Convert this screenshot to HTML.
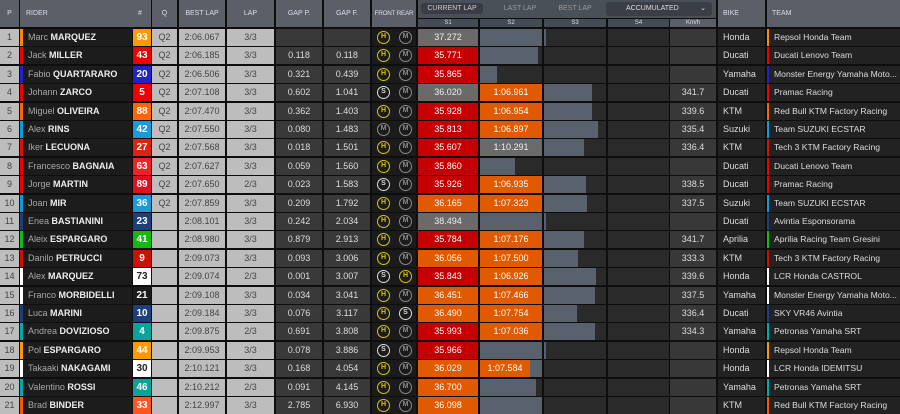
<!DOCTYPE html>
<html><head><meta charset="utf-8"><style>
*{margin:0;padding:0;box-sizing:border-box}
body{width:900px;height:414px;background:#0e0e0e;font-family:"Liberation Sans",sans-serif;overflow:hidden;position:relative}
.h{position:absolute;top:0;height:27px;background:#5b6068;color:#dde;font-size:7px;line-height:27px;text-align:center;white-space:nowrap}
.r{position:absolute;left:0;width:900px;height:17px}
.c{position:absolute;top:0;height:17px;line-height:17px;text-align:center;font-size:9px;overflow:hidden;white-space:nowrap}
.p{left:0;width:19px;background:#bdbdbd;color:#444}
.n{left:20px;width:112px;background:#1c1c1c;color:#a8a8a8;text-align:left;padding-left:5px;border-left:3px solid #f80}
.n b{color:#eee}
.no{left:133px;width:18px;color:#fff;font-weight:bold;font-size:10px}
.q{left:152px;width:25px;background:#bdbdbd;color:#444}
.bl{left:179px;width:46px;background:#bdbdbd;color:#444}
.lp{left:227px;width:47px;background:#bdbdbd;color:#444}
.gp{left:276px;width:46px;background:#393939;color:#ddd}
.gf{left:324px;width:46px;background:#393939;color:#ddd}
.ty{left:372px;width:44px;background:#1b1b1b}
.s1{left:418px;width:60px}.s2{left:480px;width:62px}.s3{left:544px;width:62px}.s4{left:608px;width:61px;background:#2a2a2a}
.km{left:670px;width:46px;background:#383838;color:#ddd}
.bk{left:718px;width:47px;background:#222;color:#ddd;text-align:left;padding-left:5px}
.tm{left:767px;width:133px;background:#222;color:#ddd;text-align:left;padding-left:5px;border-left:2px solid #f80;font-size:8.6px}
.red{background:#c40000;color:#fff}.or{background:#df5a00;color:#fff}.gy{background:#6a6a6a;color:#eee}.dk{background:#2a2a2a}
.dk i{position:absolute;left:0;top:0;height:17px;background:#59616c;font-style:normal}
.t{position:absolute;top:2px;width:13px;height:13px;border-radius:50%;border:1.5px solid #8a8a8a;color:#8a8a8a;font-size:7px;line-height:10px;text-align:center;font-weight:bold}
.t.f{left:5px}.t.b{left:27px}
.t.H{border-color:#d8c800;color:#d8c800}.t.S{border-color:#ddd;color:#ddd}
</style></head><body>
<div class="h" style="left:0;width:19px">P</div>
<div class="h" style="left:20px;width:131px;text-align:left;padding-left:6px">RIDER<span style="position:absolute;left:118px">#</span></div>
<div class="h" style="left:152px;width:25px">Q</div>
<div class="h" style="left:179px;width:46px">BEST LAP</div>
<div class="h" style="left:227px;width:47px">LAP</div>
<div class="h" style="left:276px;width:46px">GAP P.</div>
<div class="h" style="left:324px;width:46px">GAP F.</div>
<div class="h" style="left:372px;width:44px;font-size:6.3px;letter-spacing:-0.2px">FRONT REAR</div>
<div style="position:absolute;left:418px;top:0;width:298px;height:18px;background:#4a5058"></div>
<div style="position:absolute;left:421px;top:3px;width:62px;height:11px;background:#383d45;border-radius:3px;color:#ccc;font-size:7px;line-height:11px;text-align:center">CURRENT LAP</div>
<div style="position:absolute;left:490px;top:3px;width:60px;height:11px;color:#999;font-size:7px;line-height:11px;text-align:center">LAST LAP</div>
<div style="position:absolute;left:550px;top:3px;width:50px;height:11px;color:#999;font-size:7px;line-height:11px;text-align:center">BEST LAP</div>
<div style="position:absolute;left:606px;top:2px;width:106px;height:14px;background:#3a3f47;border-radius:3px;color:#ddd;font-size:7px;line-height:14px;padding-left:20px">ACCUMULATED<span style="position:absolute;right:6px">⌄</span></div>
<div class="h" style="top:19px;height:8px;line-height:8px;left:418px;width:60px;background:#454b54;font-size:6px">S1</div>
<div class="h" style="top:19px;height:8px;line-height:8px;left:480px;width:62px;background:#454b54;font-size:6px">S2</div>
<div class="h" style="top:19px;height:8px;line-height:8px;left:544px;width:62px;background:#454b54;font-size:6px">S3</div>
<div class="h" style="top:19px;height:8px;line-height:8px;left:608px;width:61px;background:#454b54;font-size:6px">S4</div>
<div class="h" style="top:19px;height:8px;line-height:8px;left:670px;width:46px;background:#5b6068;font-size:6px">Km/h</div>
<div class="h" style="left:718px;width:47px;text-align:left;padding-left:5px">BIKE</div>
<div class="h" style="left:767px;width:133px;text-align:left;padding-left:5px">TEAM</div>

<div class="r" style="top:29px"><div class="c p">1</div><div class="c n" style="border-color:#f80">Marc <b>MARQUEZ</b></div><div class="c no" style="background:#f90">93</div><div class="c q">Q2</div><div class="c bl">2:06.067</div><div class="c lp">3/3</div><div class="c gp"></div><div class="c gf"></div><div class="c ty"><span class="t f H">H</span><span class="t b">M</span></div><div class="c s1 gy">37.272</div><div class="c s2 dk"><i style="width:62px"></i></div><div class="c s3 dk"><i style="width:2px"></i></div><div class="c s4"></div><div class="c km"></div><div class="c bk">Honda</div><div class="c tm" style="border-color:#f80">Repsol Honda Team</div></div>

<div class="r" style="top:47.4px"><div class="c p">2</div><div class="c n" style="border-color:#e00">Jack <b>MILLER</b></div><div class="c no" style="background:#e00">43</div><div class="c q">Q2</div><div class="c bl">2:06.185</div><div class="c lp">3/3</div><div class="c gp">0.118</div><div class="c gf">0.118</div><div class="c ty"><span class="t f H">H</span><span class="t b">M</span></div><div class="c s1 red">35.771</div><div class="c s2 dk"><i style="width:58px"></i></div><div class="c s3 dk"></div><div class="c s4"></div><div class="c km"></div><div class="c bk">Ducati</div><div class="c tm" style="border-color:#e00">Ducati Lenovo Team</div></div>

<div class="r" style="top:65.8px"><div class="c p">3</div><div class="c n" style="border-color:#22c">Fabio <b>QUARTARARO</b></div><div class="c no" style="background:#22c">20</div><div class="c q">Q2</div><div class="c bl">2:06.506</div><div class="c lp">3/3</div><div class="c gp">0.321</div><div class="c gf">0.439</div><div class="c ty"><span class="t f H">H</span><span class="t b">M</span></div><div class="c s1 red">35.865</div><div class="c s2 dk"><i style="width:17px"></i></div><div class="c s3 dk"></div><div class="c s4"></div><div class="c km"></div><div class="c bk">Yamaha</div><div class="c tm" style="border-color:#22c">Monster Energy Yamaha Moto...</div></div>

<div class="r" style="top:84.2px"><div class="c p">4</div><div class="c n" style="border-color:#e00">Johann <b>ZARCO</b></div><div class="c no" style="background:#e00">5</div><div class="c q">Q2</div><div class="c bl">2:07.108</div><div class="c lp">3/3</div><div class="c gp">0.602</div><div class="c gf">1.041</div><div class="c ty"><span class="t f S">S</span><span class="t b">M</span></div><div class="c s1 gy">36.020</div><div class="c s2 or">1:06.961</div><div class="c s3 dk"><i style="width:48px"></i></div><div class="c s4"></div><div class="c km">341.7</div><div class="c bk">Ducati</div><div class="c tm" style="border-color:#e00">Pramac Racing</div></div>

<div class="r" style="top:102.6px"><div class="c p">5</div><div class="c n" style="border-color:#f60">Miguel <b>OLIVEIRA</b></div><div class="c no" style="background:#f60">88</div><div class="c q">Q2</div><div class="c bl">2:07.470</div><div class="c lp">3/3</div><div class="c gp">0.362</div><div class="c gf">1.403</div><div class="c ty"><span class="t f H">H</span><span class="t b">M</span></div><div class="c s1 red">35.928</div><div class="c s2 or">1:06.954</div><div class="c s3 dk"><i style="width:48px"></i></div><div class="c s4"></div><div class="c km">339.6</div><div class="c bk">KTM</div><div class="c tm" style="border-color:#f60">Red Bull KTM Factory Racing</div></div>

<div class="r" style="top:121px"><div class="c p">6</div><div class="c n" style="border-color:#19d">Alex <b>RINS</b></div><div class="c no" style="background:#1a9ad6">42</div><div class="c q">Q2</div><div class="c bl">2:07.550</div><div class="c lp">3/3</div><div class="c gp">0.080</div><div class="c gf">1.483</div><div class="c ty"><span class="t f">M</span><span class="t b">M</span></div><div class="c s1 red">35.813</div><div class="c s2 or">1:06.897</div><div class="c s3 dk"><i style="width:54px"></i></div><div class="c s4"></div><div class="c km">335.4</div><div class="c bk">Suzuki</div><div class="c tm" style="border-color:#19d">Team SUZUKI ECSTAR</div></div>

<div class="r" style="top:139.4px"><div class="c p">7</div><div class="c n" style="border-color:#d10">Iker <b>LECUONA</b></div><div class="c no" style="background:#d21">27</div><div class="c q">Q2</div><div class="c bl">2:07.568</div><div class="c lp">3/3</div><div class="c gp">0.018</div><div class="c gf">1.501</div><div class="c ty"><span class="t f H">H</span><span class="t b">M</span></div><div class="c s1 red">35.607</div><div class="c s2 gy">1:10.291</div><div class="c s3 dk"><i style="width:40px"></i></div><div class="c s4"></div><div class="c km">336.4</div><div class="c bk">KTM</div><div class="c tm" style="border-color:#d10">Tech 3 KTM Factory Racing</div></div>

<div class="r" style="top:157.8px"><div class="c p">8</div><div class="c n" style="border-color:#e00">Francesco <b>BAGNAIA</b></div><div class="c no" style="background:#e22">63</div><div class="c q">Q2</div><div class="c bl">2:07.627</div><div class="c lp">3/3</div><div class="c gp">0.059</div><div class="c gf">1.560</div><div class="c ty"><span class="t f H">H</span><span class="t b">M</span></div><div class="c s1 red">35.860</div><div class="c s2 dk"><i style="width:35px"></i></div><div class="c s3 dk"></div><div class="c s4"></div><div class="c km"></div><div class="c bk">Ducati</div><div class="c tm" style="border-color:#e00">Ducati Lenovo Team</div></div>

<div class="r" style="top:176.2px"><div class="c p">9</div><div class="c n" style="border-color:#e00">Jorge <b>MARTIN</b></div><div class="c no" style="background:#d12">89</div><div class="c q">Q2</div><div class="c bl">2:07.650</div><div class="c lp">2/3</div><div class="c gp">0.023</div><div class="c gf">1.583</div><div class="c ty"><span class="t f S">S</span><span class="t b">M</span></div><div class="c s1 red">35.926</div><div class="c s2 or">1:06.935</div><div class="c s3 dk"><i style="width:42px"></i></div><div class="c s4"></div><div class="c km">338.5</div><div class="c bk">Ducati</div><div class="c tm" style="border-color:#e00">Pramac Racing</div></div>

<div class="r" style="top:194.6px"><div class="c p">10</div><div class="c n" style="border-color:#19d">Joan <b>MIR</b></div><div class="c no" style="background:#1a9ad6">36</div><div class="c q">Q2</div><div class="c bl">2:07.859</div><div class="c lp">3/3</div><div class="c gp">0.209</div><div class="c gf">1.792</div><div class="c ty"><span class="t f H">H</span><span class="t b">M</span></div><div class="c s1 or">36.165</div><div class="c s2 or">1:07.323</div><div class="c s3 dk"><i style="width:43px"></i></div><div class="c s4"></div><div class="c km">337.5</div><div class="c bk">Suzuki</div><div class="c tm" style="border-color:#19d">Team SUZUKI ECSTAR</div></div>

<div class="r" style="top:213px"><div class="c p">11</div><div class="c n" style="border-color:#1d3f7a">Enea <b>BASTIANINI</b></div><div class="c no" style="background:#1d3f7a">23</div><div class="c q"></div><div class="c bl">2:08.101</div><div class="c lp">3/3</div><div class="c gp">0.242</div><div class="c gf">2.034</div><div class="c ty"><span class="t f H">H</span><span class="t b">M</span></div><div class="c s1 gy">38.494</div><div class="c s2 dk"><i style="width:62px"></i></div><div class="c s3 dk"><i style="width:2px"></i></div><div class="c s4"></div><div class="c km"></div><div class="c bk">Ducati</div><div class="c tm" style="border-color:#1d3f7a">Avintia Esponsorama</div></div>

<div class="r" style="top:231.4px"><div class="c p">12</div><div class="c n" style="border-color:#1b1">Aleix <b>ESPARGARO</b></div><div class="c no" style="background:#1b1">41</div><div class="c q"></div><div class="c bl">2:08.980</div><div class="c lp">3/3</div><div class="c gp">0.879</div><div class="c gf">2.913</div><div class="c ty"><span class="t f H">H</span><span class="t b">M</span></div><div class="c s1 red">35.784</div><div class="c s2 or">1:07.176</div><div class="c s3 dk"><i style="width:40px"></i></div><div class="c s4"></div><div class="c km">341.7</div><div class="c bk">Aprilia</div><div class="c tm" style="border-color:#1b1">Aprilia Racing Team Gresini</div></div>

<div class="r" style="top:249.8px"><div class="c p">13</div><div class="c n" style="border-color:#c10">Danilo <b>PETRUCCI</b></div><div class="c no" style="background:#c10">9</div><div class="c q"></div><div class="c bl">2:09.073</div><div class="c lp">3/3</div><div class="c gp">0.093</div><div class="c gf">3.006</div><div class="c ty"><span class="t f H">H</span><span class="t b">M</span></div><div class="c s1 or">36.056</div><div class="c s2 or">1:07.500</div><div class="c s3 dk"><i style="width:34px"></i></div><div class="c s4"></div><div class="c km">333.3</div><div class="c bk">KTM</div><div class="c tm" style="border-color:#c10">Tech 3 KTM Factory Racing</div></div>

<div class="r" style="top:268.2px"><div class="c p">14</div><div class="c n" style="border-color:#fff">Alex <b>MARQUEZ</b></div><div class="c no" style="background:#fff;color:#222">73</div><div class="c q"></div><div class="c bl">2:09.074</div><div class="c lp">2/3</div><div class="c gp">0.001</div><div class="c gf">3.007</div><div class="c ty"><span class="t f S">S</span><span class="t b H">H</span></div><div class="c s1 red">35.843</div><div class="c s2 or">1:06.926</div><div class="c s3 dk"><i style="width:52px"></i></div><div class="c s4"></div><div class="c km">339.6</div><div class="c bk">Honda</div><div class="c tm" style="border-color:#fff">LCR Honda CASTROL</div></div>

<div class="r" style="top:286.6px"><div class="c p">15</div><div class="c n" style="border-color:#fff">Franco <b>MORBIDELLI</b></div><div class="c no" style="background:#1c1c1c">21</div><div class="c q"></div><div class="c bl">2:09.108</div><div class="c lp">3/3</div><div class="c gp">0.034</div><div class="c gf">3.041</div><div class="c ty"><span class="t f H">H</span><span class="t b">M</span></div><div class="c s1 or">36.451</div><div class="c s2 or">1:07.466</div><div class="c s3 dk"><i style="width:51px"></i></div><div class="c s4"></div><div class="c km">337.5</div><div class="c bk">Yamaha</div><div class="c tm" style="border-color:#fff">Monster Energy Yamaha Moto...</div></div>

<div class="r" style="top:305px"><div class="c p">16</div><div class="c n" style="border-color:#1d3f7a">Luca <b>MARINI</b></div><div class="c no" style="background:#1d3f7a">10</div><div class="c q"></div><div class="c bl">2:09.184</div><div class="c lp">3/3</div><div class="c gp">0.076</div><div class="c gf">3.117</div><div class="c ty"><span class="t f H">H</span><span class="t b S">S</span></div><div class="c s1 or">36.490</div><div class="c s2 or">1:07.754</div><div class="c s3 dk"><i style="width:33px"></i></div><div class="c s4"></div><div class="c km">336.4</div><div class="c bk">Ducati</div><div class="c tm" style="border-color:#1d3f7a">SKY VR46 Avintia</div></div>

<div class="r" style="top:323.4px"><div class="c p">17</div><div class="c n" style="border-color:#0aa">Andrea <b>DOVIZIOSO</b></div><div class="c no" style="background:#0aa39a">4</div><div class="c q"></div><div class="c bl">2:09.875</div><div class="c lp">2/3</div><div class="c gp">0.691</div><div class="c gf">3.808</div><div class="c ty"><span class="t f H">H</span><span class="t b">M</span></div><div class="c s1 red">35.993</div><div class="c s2 or">1:07.036</div><div class="c s3 dk"><i style="width:51px"></i></div><div class="c s4"></div><div class="c km">334.3</div><div class="c bk">Yamaha</div><div class="c tm" style="border-color:#0aa">Petronas Yamaha SRT</div></div>

<div class="r" style="top:341.8px"><div class="c p">18</div><div class="c n" style="border-color:#f90">Pol <b>ESPARGARO</b></div><div class="c no" style="background:#f90">44</div><div class="c q"></div><div class="c bl">2:09.953</div><div class="c lp">3/3</div><div class="c gp">0.078</div><div class="c gf">3.886</div><div class="c ty"><span class="t f S">S</span><span class="t b">M</span></div><div class="c s1 red">35.966</div><div class="c s2 dk"><i style="width:62px"></i></div><div class="c s3 dk"><i style="width:2px"></i></div><div class="c s4"></div><div class="c km"></div><div class="c bk">Honda</div><div class="c tm" style="border-color:#f90">Repsol Honda Team</div></div>

<div class="r" style="top:360.2px"><div class="c p">19</div><div class="c n" style="border-color:#fff">Takaaki <b>NAKAGAMI</b></div><div class="c no" style="background:#fff;color:#222">30</div><div class="c q"></div><div class="c bl">2:10.121</div><div class="c lp">3/3</div><div class="c gp">0.168</div><div class="c gf">4.054</div><div class="c ty"><span class="t f H">H</span><span class="t b">M</span></div><div class="c s1 or">36.029</div><div class="c s2 dk"><i style="width:62px"></i><i style="width:50px;background:#df5a00;color:#fff">1:07.584</i></div><div class="c s3 dk"></div><div class="c s4"></div><div class="c km"></div><div class="c bk">Honda</div><div class="c tm" style="border-color:#fff">LCR Honda IDEMITSU</div></div>

<div class="r" style="top:378.6px"><div class="c p">20</div><div class="c n" style="border-color:#0aa">Valentino <b>ROSSI</b></div><div class="c no" style="background:#0aa39a">46</div><div class="c q"></div><div class="c bl">2:10.212</div><div class="c lp">2/3</div><div class="c gp">0.091</div><div class="c gf">4.145</div><div class="c ty"><span class="t f H">H</span><span class="t b">M</span></div><div class="c s1 or">36.700</div><div class="c s2 dk"><i style="width:56px"></i></div><div class="c s3 dk"></div><div class="c s4"></div><div class="c km"></div><div class="c bk">Yamaha</div><div class="c tm" style="border-color:#0aa">Petronas Yamaha SRT</div></div>

<div class="r" style="top:397px"><div class="c p">21</div><div class="c n" style="border-color:#f50">Brad <b>BINDER</b></div><div class="c no" style="background:#f52">33</div><div class="c q"></div><div class="c bl">2:12.997</div><div class="c lp">3/3</div><div class="c gp">2.785</div><div class="c gf">6.930</div><div class="c ty"><span class="t f H">H</span><span class="t b">M</span></div><div class="c s1 or">36.098</div><div class="c s2 dk"><i style="width:62px"></i></div><div class="c s3 dk"></div><div class="c s4"></div><div class="c km"></div><div class="c bk">KTM</div><div class="c tm" style="border-color:#f50">Red Bull KTM Factory Racing</div></div>
</body></html>
